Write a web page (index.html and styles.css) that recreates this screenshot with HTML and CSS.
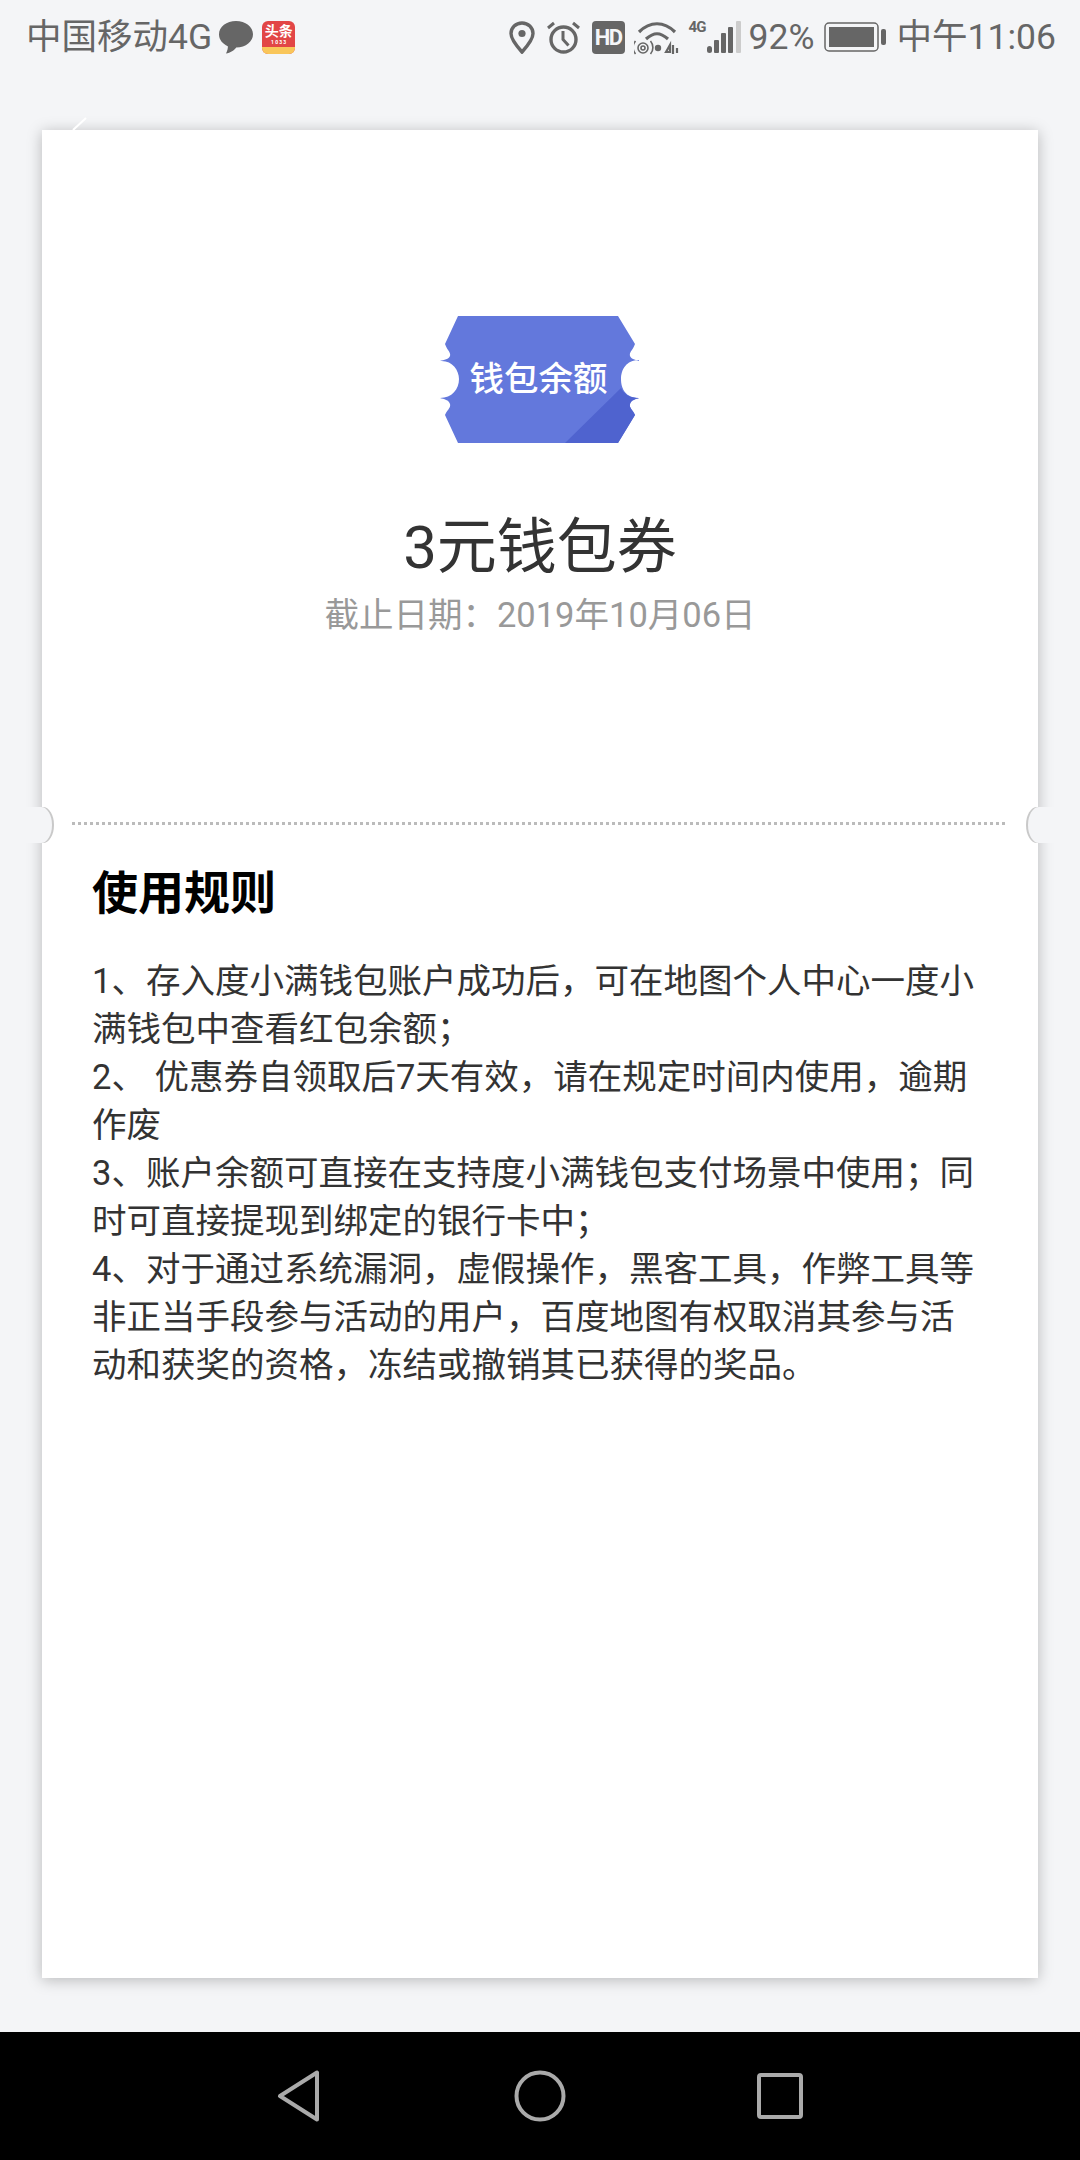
FILE: index.html
```html
<!DOCTYPE html>
<html lang="zh-CN">
<head>
<meta charset="utf-8">
<title>3元钱包券</title>
<link rel="stylesheet" href="styles.css">
</head>
<body>
<div class="page">
  <header class="status">
    <div class="status-left">
      <span class="carrier">中国移动4G</span>
      <svg class="i-bubble" viewBox="0 0 34 33"><path d="M17 0C7.600 0 0 5.900 0 13.300c0 5.600 3.600 9.600 8.800 11.900.4 1.400-.5 4.700-1.800 7.300 4.300-.3 8.400-3.200 10.200-5.900C27 26.600 34 20.500 34 13.300 34 5.900 26.400 0 17 0z"/></svg>
      <span class="toutiao"><span class="tt-main">头条</span><span class="tt-sub">1 0 3 3</span><span class="tt-foot"></span></span>
    </div>
    <div class="status-right">
      <svg class="i-pin" viewBox="0 0 26 33"><path d="M13 2C6.800 2 2 6.700 2 12.600 2 19 8.500 26 13 31c4.500-5 11-12 11-18.400C24 6.700 19.200 2 13 2z" fill="none" stroke="#666" stroke-width="3.400"/><circle cx="13" cy="12.500" r="3.600" fill="#666"/></svg>
      <svg class="i-alarm" viewBox="0 0 33 33"><circle cx="16.500" cy="18.500" r="12.500" fill="none" stroke="#666" stroke-width="3.400"/><path d="M16 10v8.500l5.500 6" fill="none" stroke="#666" stroke-width="3"/><path d="M1 7l6-5M32 7l-6-5" stroke="#666" stroke-width="3" fill="none"/></svg>
      <span class="hd">HD</span>
      <svg class="i-wifi" viewBox="0 0 46 36"><g fill="none" stroke="#666" stroke-width="3.200"><path d="M5 13C16 2 30 2 41 13"/><path d="M12 20c8-7 14-7 22 0"/></g><circle cx="24" cy="29" r="3.200" fill="#666"/><g fill="none" stroke="#666" stroke-width="1.600"><circle cx="9" cy="29" r="2"/><circle cx="9" cy="29" r="5"/><path d="M1.500 35a10 10 0 0 1 0-13M16.500 22a10 10 0 0 1 0 13"/></g><path d="M32 33l4-7v7zM39 26v9M43 29v5" stroke="#666" stroke-width="2.200" fill="none"/></svg>
      <span class="net"><span class="net-4g">4G</span>
        <svg class="i-signal" viewBox="0 0 35 33"><rect x="0" y="25" width="5" height="7" rx="2.500" fill="#666"/><rect x="7" y="19" width="5" height="13" rx="1" fill="#666"/><rect x="14" y="12" width="5" height="20" rx="1" fill="#666"/><rect x="21" y="6" width="5" height="26" rx="1" fill="#666"/><rect x="29" y="0" width="5" height="32" rx="1" fill="#ccc"/></svg>
      </span>
      <span class="pct">92%</span>
      <svg class="i-batt" viewBox="0 0 62 30"><rect x="1" y="1" width="53" height="28" rx="4" fill="none" stroke="#666" stroke-width="1.500"/><rect x="5" y="5" width="45" height="20" fill="#666"/><rect x="57" y="7" width="5" height="16" rx="2" fill="#666"/></svg>
      <span class="time">中午11:06</span>
    </div>
  </header>

  <main class="stage">
    <svg class="back-mark" viewBox="0 0 16 14"><path d="M1 13L14 1" stroke="#fff" stroke-width="2" fill="none"/></svg>
    <section class="card">
      <div class="top">
        <div class="coupon">
          <svg class="coupon-bg" viewBox="0 0 200 127">
            <path d="M18 0H178L195 28C193 34 189 36 190 40 191 43 196 44 199 45V44C186 44 181 54 181 63 181 73 186 82 199 82 196 83 191 84 190 88 189 92 193 94 195 99L178 127H18L5 99C7 94 11 92 10 88 9 84 4 83 0 82 12 82 19 73 19 63 19 54 12 44 0 45 4 44 9 43 10 40 11 36 7 34 5 28z" fill="#6378dc"/>
            <path d="M181 72C184 78 189 82 199 82 196 83 191 84 190 88 189 92 193 94 195 99L178 127H125z" fill="#4f63cf"/>
          </svg>
          <span class="coupon-text">钱包余额</span>
        </div>
        <h1 class="title">3元钱包券</h1>
        <p class="deadline">截止日期：2019年10月06日</p>
      </div>

      <div class="divider">
        <span class="notch notch-l"></span>
        <span class="dots"></span>
        <span class="notch notch-r"></span>
      </div>

      <div class="rules">
        <h2 class="rules-title">使用规则</h2>
        <p class="rule">1、存入度小满钱包账户成功后，可在地图个人中心一度小满钱包中查看红包余额；</p>
        <p class="rule">2、 优惠券自领取后7天有效，请在规定时间内使用，逾期作废</p>
        <p class="rule">3、账户余额可直接在支持度小满钱包支付场景中使用；同时可直接提现到绑定的银行卡中；</p>
        <p class="rule">4、对于通过系统漏洞，虚假操作，黑客工具，作弊工具等非正当手段参与活动的用户，百度地图有权取消其参与活动和获奖的资格，冻结或撤销其已获得的奖品。</p>
      </div>
    </section>
  </main>

  <nav class="navbar">
    <svg class="nav-back" viewBox="0 0 44 52"><path d="M3 26L40 2.500V49.500z" fill="none" stroke="#aaa" stroke-width="4" stroke-linejoin="round"/></svg>
    <svg class="nav-home" viewBox="0 0 52 52"><circle cx="26" cy="26" r="23.500" fill="none" stroke="#aaa" stroke-width="4"/></svg>
    <svg class="nav-recent" viewBox="0 0 46 46"><rect x="2" y="2" width="42" height="42" rx="2" fill="none" stroke="#aaa" stroke-width="4"/></svg>
  </nav>
</div>
</body>
</html>
```
FILE: styles.css
```css
* { box-sizing: border-box; }
html, body { margin: 0; padding: 0; }
body {
  width: 1080px;
  height: 2160px;
  overflow: hidden;
  background: #f4f5f7;
  font-family: Roboto, "Noto Sans CJK SC", sans-serif;
}
.page { display: flex; flex-direction: column; height: 2160px; }

.status {
  height: 72px;
  flex: none;
  padding: 19px 24px 0 26px;
  display: flex;
  justify-content: space-between;
  align-items: flex-start;
  color: #666;
  font-size: 35.500px;
  line-height: 36px;
}
.status-left, .status-right { display: flex; align-items: center; height: 36px; }
.carrier { white-space: nowrap; }
.i-bubble { width: 34px; height: 33px; margin-left: 7px; fill: #666; }
.toutiao {
  width: 33px; height: 33px; margin-left: 9px;
  border-radius: 6px;
  background: #e24646;
  display: flex; flex-direction: column; align-items: center;
  overflow: hidden;
  color: #fff;
}
.tt-main { font-size: 14px; line-height: 16px; font-weight: 700; margin-top: 2px; white-space: nowrap; }
.tt-sub { font-size: 5px; line-height: 7px; font-weight: 700; white-space: nowrap; }
.tt-foot { flex: 1; width: 100%; background: #f9c65a; margin-top: 1px; }

.i-pin { width: 26px; height: 33px; }
.i-alarm { width: 33px; height: 33px; margin-left: 12px; }
.hd {
  width: 33px; height: 33px; margin-left: 12px;
  border-radius: 4px;
  background: #666; color: #f4f5f7;
  font-size: 22px; line-height: 33px; font-weight: 700;
  text-align: center;
  letter-spacing: -1.500px;
}
.i-wifi { width: 46px; height: 36px; margin-left: 9px; }
.net { position: relative; width: 53px; height: 33px; margin-left: 9px; display: block; }
.net-4g {
  position: absolute; left: 0; top: -1px;
  font-size: 15px; line-height: 15px; font-weight: 700;
  letter-spacing: -1px;
}
.i-signal { position: absolute; right: 0; top: 0; width: 35px; height: 33px; }
.pct { margin-left: 7px; width: 66px; white-space: nowrap; }
.i-batt { width: 62px; height: 30px; margin-left: 9px; }
.time { margin-left: 11px; white-space: nowrap; }

.stage { position: relative; flex: 1; padding: 58px 42px 54px; }
.back-mark { position: absolute; left: 72px; top: 45px; width: 16px; height: 14px; }

.card {
  height: 100%;
  background: #fff;
  box-shadow: 0 2px 14px rgba(0,0,0,.25);
  display: flex;
  flex-direction: column;
}
.top {
  height: 677px;
  padding-top: 186px;
  display: flex; flex-direction: column; align-items: center;
}
.coupon { position: relative; width: 200px; height: 127px; display: flex; align-items: center; justify-content: center; }
.coupon-bg { position: absolute; left: 0; top: 0; width: 200px; height: 127px; }
.coupon-text {
  position: relative;
  color: #fff;
  font-size: 34.500px;
  line-height: 40px;
  font-weight: 500;
  margin: -1px 3px 0 0;
  white-space: nowrap;
}
.title {
  margin: 70px 0 0;
  color: #333;
  font-size: 60px;
  line-height: 70px;
  font-weight: 400;
}
.deadline {
  margin: 11px 0 0;
  color: #999;
  font-size: 34.500px;
  line-height: 42px;
}

.divider { position: relative; height: 32px; display: flex; align-items: center; padding: 0 30px; flex: none; }
.dots {
  display: block; width: 100%; height: 3px;
  background: repeating-linear-gradient(90deg, #bbb 0 3px, transparent 3px 6px);
}
.notch {
  position: absolute; top: 0;
  width: 34px; height: 36px;
  background: #f4f5f7;
}
.notch-l {
  left: -24px;
  border-radius: 0 11px 11px 0 / 0 18px 18px 0;
  box-shadow: 2px 0 0 #c9c9c9;
}
.notch-r {
  right: -24px;
  border-radius: 11px 0 0 11px / 18px 0 0 18px;
  box-shadow: -2px 0 0 #c9c9c9;
}

.rules { padding: 27px 58px 0 50px; }
.rules-title {
  margin: 0 0 37px;
  color: #000;
  font-size: 46px;
  line-height: 54px;
  font-weight: 700;
}
.rule {
  margin: 0;
  color: #333;
  font-size: 34.500px;
  line-height: 48px;
}

.navbar { position: relative; height: 128px; flex: none; background: #000; }
.nav-back, .nav-home, .nav-recent { position: absolute; }
.nav-back { left: 277px; top: 38px; width: 44px; height: 52px; }
.nav-home { left: 514px; top: 38px; width: 52px; height: 52px; }
.nav-recent { left: 757px; top: 41px; width: 46px; height: 46px; }
```
